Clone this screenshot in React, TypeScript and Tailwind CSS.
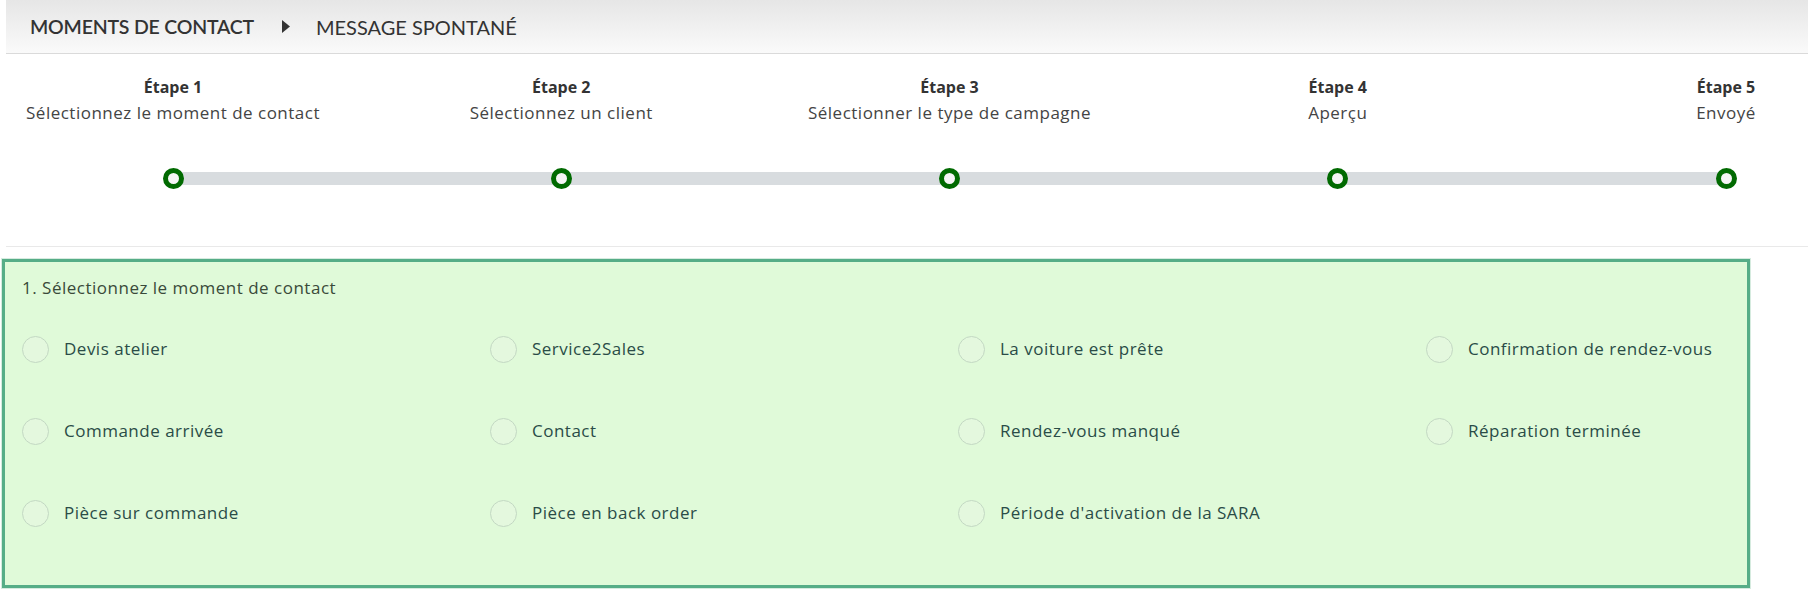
import React from "react";

const steps = [
  { title: "Étape 1", label: "Sélectionnez le moment de contact" },
  { title: "Étape 2", label: "Sélectionnez un client" },
  { title: "Étape 3", label: "Sélectionner le type de campagne" },
  { title: "Étape 4", label: "Aperçu" },
  { title: "Étape 5", label: "Envoyé" },
];

const moments = [
  "Devis atelier",
  "Service2Sales",
  "La voiture est prête",
  "Confirmation de rendez-vous",
  "Commande arrivée",
  "Contact",
  "Rendez-vous manqué",
  "Réparation terminée",
  "Pièce sur commande",
  "Pièce en back order",
  "Période d'activation de la SARA",
];

function Breadcrumb() {
  return (
    <div className="ml-[6px] flex h-[54px] items-center border-b border-[#dadada] bg-gradient-to-b from-[#e6e6e6] to-[#fafafa] pl-[24px] font-['Lato',sans-serif] text-[20px] text-[#333]">
      <span className="text-[19.5px] font-semibold tracking-[-0.2px]">MOMENTS DE CONTACT</span>
      <svg className="ml-[28px] mr-[26px]" width="8" height="13" viewBox="0 0 8 13">
        <path d="M0 0 L8 6.5 L0 13 Z" fill="#333" />
      </svg>
      <span>MESSAGE SPONTANÉ</span>
    </div>
  );
}

function Stepper() {
  return (
    <div className="ml-[6px] border-b border-[#e9e9e9] pb-[61px] pt-[20px] font-['Open_Sans',sans-serif]">
      <div className="ml-[167px] w-[1553px]">
        <div className="flex justify-between">
          {steps.map((s) => (
            <div key={s.title} className="flex w-0 flex-col items-center whitespace-nowrap leading-[26px]">
              <span className="text-[16px] font-bold text-[#333]">{s.title}</span>
              <span className="text-[17px] tracking-[0.5px] text-[#444]">{s.label}</span>
            </div>
          ))}
        </div>
        <div className="mt-[46px] h-[13px] bg-[#d8dcdf]">
          <div className="-mx-[10.5px] flex h-full items-center justify-between">
            {steps.map((s) => (
              <span
                key={s.title}
                className="h-[21px] w-[21px] rounded-full border-[5px] border-[#016a01] bg-[#f5f5f5]"
              />
            ))}
          </div>
        </div>
      </div>
    </div>
  );
}

function MomentPicker() {
  return (
    <div className="ml-[2px] mt-[12px] w-[1748px] border-[3px] border-[#56ad87] bg-[#e0fad9] pb-[31px] pl-[17px] pt-[14px] font-['Open_Sans',sans-serif] text-[17px] tracking-[0.5px] shadow-[0_0_0_1px_#d6ebdf]">
      <div className="leading-[24px] text-[#3a4a3a]">1. Sélectionnez le moment de contact</div>
      <div className="mt-[8px] grid grid-cols-[repeat(4,468px)]">
        {moments.map((m) => (
          <label key={m} className="flex h-[82px] items-center gap-[15px] text-[#2a4c47]">
            <span className="h-[27px] w-[27px] rounded-full border border-[#c3d8c3] bg-[#e4f8de]" />
            <span>{m}</span>
          </label>
        ))}
      </div>
    </div>
  );
}

export default function App() {
  return (
    <div className="min-h-screen w-[1808px] bg-white">
      <Breadcrumb />
      <Stepper />
      <MomentPicker />
    </div>
  );
}
